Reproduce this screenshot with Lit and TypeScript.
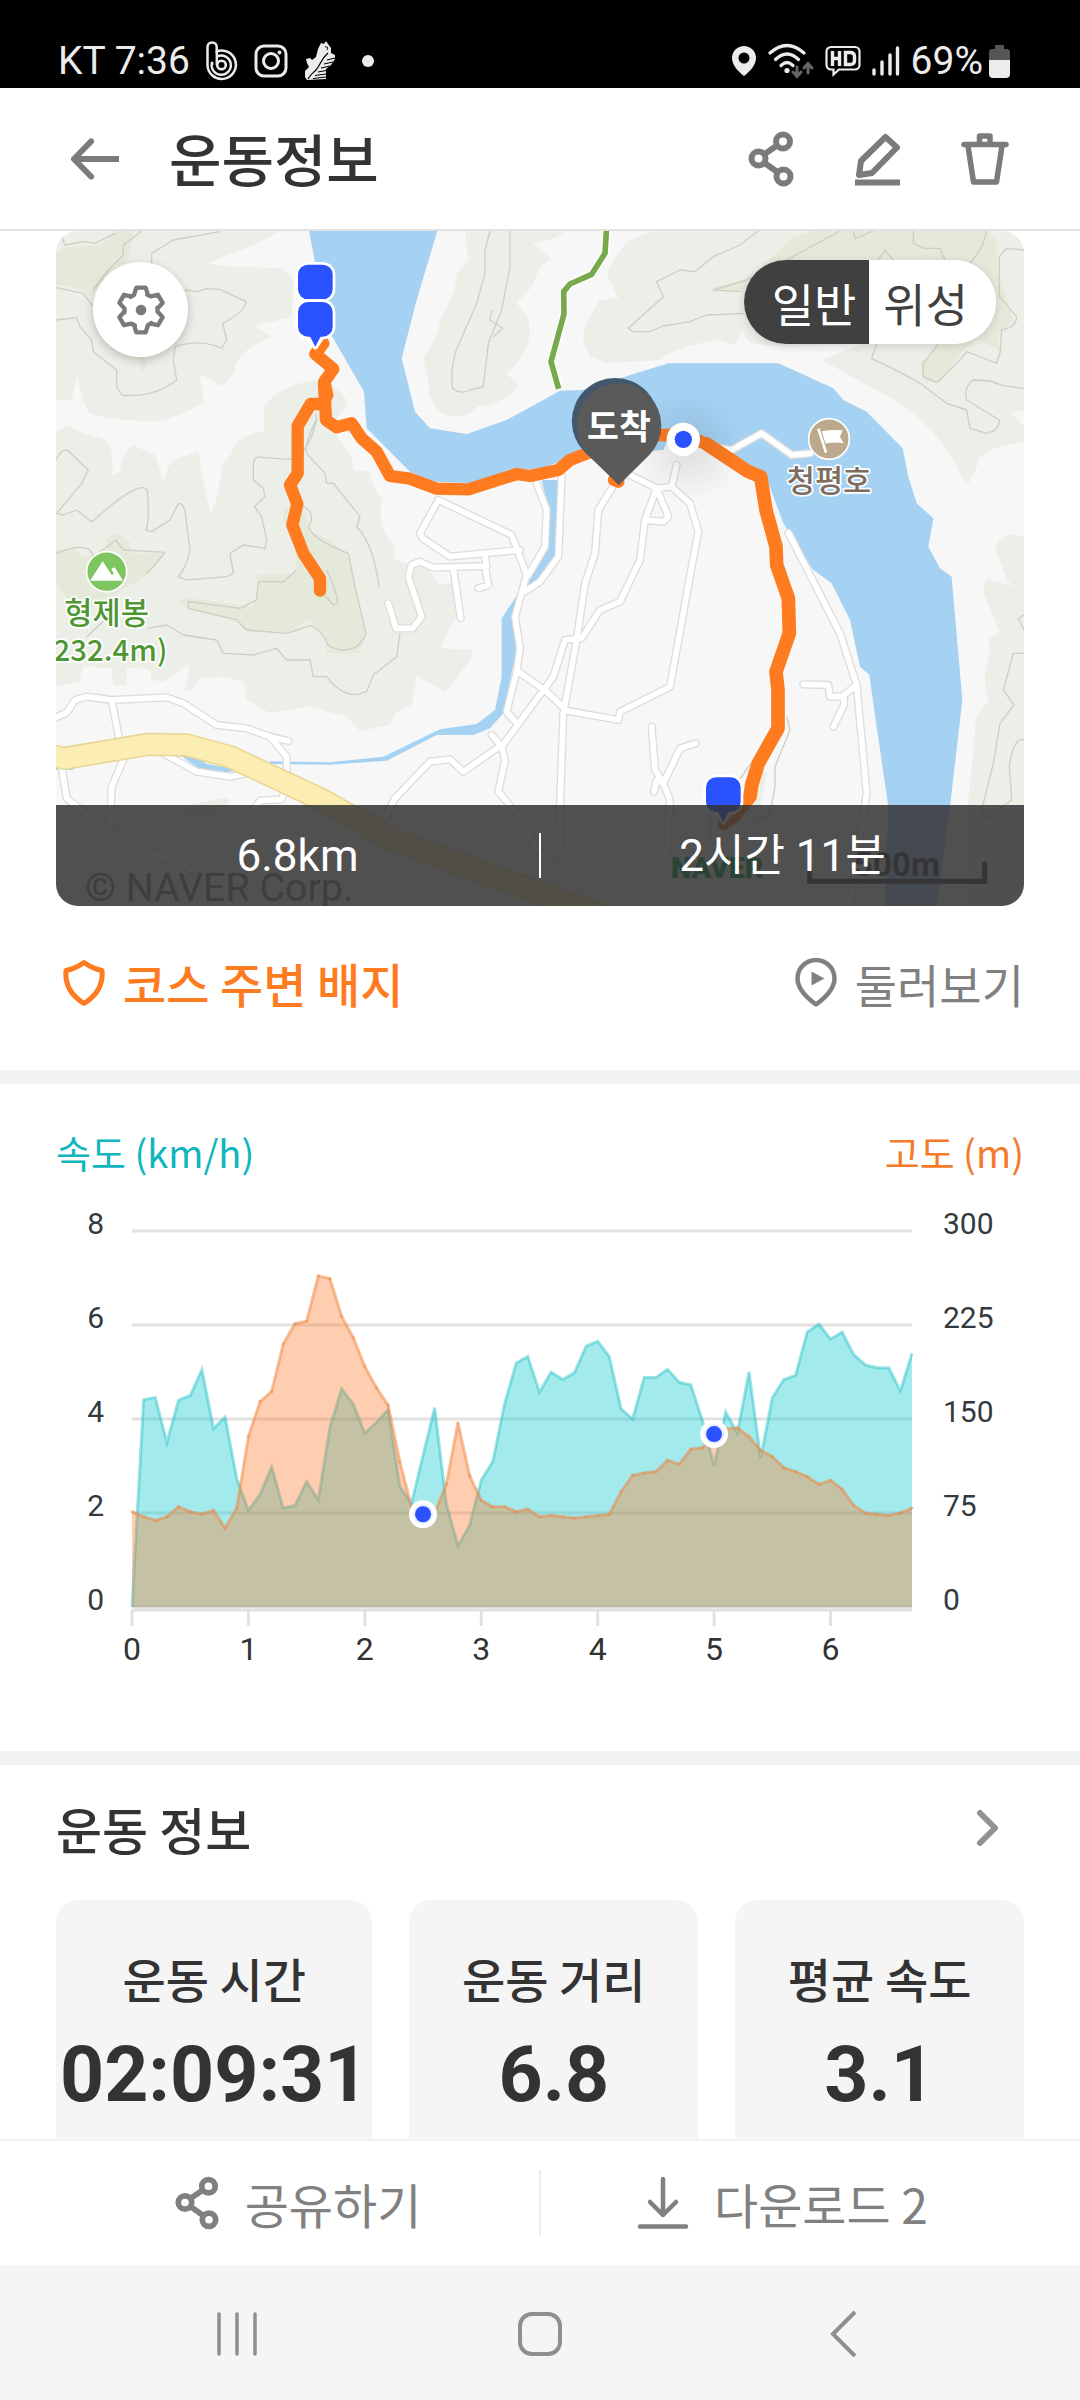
import { LitElement, html, svg, css } from "lit";
import { customElement, state } from "lit/decorators.js";

/** Speed in km/h and altitude in metres, one sample for every 100 m. */
const SPEED = [
  0, 4.41, 4.46, 3.5, 4.4, 4.5, 5.05, 3.8, 4.04, 2.73, 2.05, 2.4, 2.98, 2.1, 2.16, 2.67, 2.28, 3.83, 4.64, 4.32,
  3.7, 3.93, 4.2, 2.57, 2.2, 3.22, 4.24, 2.2, 1.3, 1.74, 2.7, 3.1, 4.32, 5.19, 5.33, 4.57, 5, 4.84, 4.98, 5.55,
  5.65, 5.33, 4.22, 4, 4.88, 4.88, 5.06, 4.78, 4.73, 3.97, 3, 4.15, 3.7, 5, 3.17, 4.45, 4.84, 4.93, 5.85, 6.02,
  5.7, 5.85, 5.37, 5.15, 5.09, 5.09, 4.6, 5.4,
];
const ALTITUDE = [
  76, 72, 69, 72, 80, 76, 74, 77, 63, 79, 136, 164, 172, 210, 226, 228, 264, 262, 232, 215, 192, 175, 161, 116, 80,
  74, 75, 98, 147, 105, 85, 80, 80, 76, 78, 72, 73, 72, 71, 72, 73, 74, 92, 105, 107, 108, 117, 114, 126, 127, 138,
  142, 143, 136, 125, 120, 111, 108, 104, 98, 101, 94, 81, 75, 74, 73, 75, 79,
];

const shareIcon = (w: number) => html`
  <svg width=${w} height=${w + 8} viewBox="0 0 48 56" fill="none" stroke="currentColor" stroke-width="6" aria-hidden="true">
    <circle cx="11.5" cy="27.5" r="7"></circle>
    <circle cx="36" cy="10.5" r="7"></circle>
    <circle cx="36.5" cy="45.5" r="7"></circle>
    <path d="M17 23.500L30 14.500M17 31.500L31 41.500"></path>
  </svg>`;

@customElement("status-bar")
class StatusBar extends LitElement {
  static styles = css`
    :host {
      display: flex;
      justify-content: space-between;
      align-items: flex-end;
      height: 88px;
      padding: 0 70px 1px 58px;
      box-sizing: border-box;
      background: #000;
      color: #ececec;
      font: 400 39px/52px Roboto, "Noto Sans CJK KR", sans-serif;
    }
    .side {
      display: flex;
      align-items: center;
      height: 52px;
    }
    .left {
      gap: 16px;
    }
    .right {
      gap: 11px;
    }
    svg {
      display: block;
    }
    .charge {
      display: flex;
      align-items: center;
      gap: 6px;
    }
  `;
  render() {
    return html`
      <div class="side left">
        <span>KT 7:36</span>
        <svg width="32" height="40" viewBox="0 0 32 40" fill="none" stroke="#ececec" aria-hidden="true">
          <path d="M1.500 24V6a4.600 4.600 0 0 1 9.200 0v4.500a14.200 14.200 0 1 1-9.200 13.500" stroke-width="2.500"></path>
          <path d="M6.200 24V21a9.600 9.600 0 1 0 5-5.500" stroke-width="2.400"></path>
          <path d="M10.800 10v14" stroke-width="2.400"></path>
          <circle cx="15.500" cy="24" r="4.300" stroke-width="2.600"></circle>
        </svg>
        <svg width="34" height="34" viewBox="0 0 34 34" fill="none" stroke="#ececec" stroke-width="3" aria-hidden="true">
          <rect x="2" y="2" width="30" height="30" rx="8"></rect>
          <circle cx="17" cy="17" r="7.500"></circle>
          <circle cx="25.500" cy="8.500" r="2" fill="#ececec" stroke="none"></circle>
        </svg>
        <svg width="32" height="40" viewBox="0 0 32 40" aria-hidden="true">
          <path
            d="M1 30L5 26 3 22 2 18 6 17 8 19 12 16 14 8 17 2 20 3 22 0 24 3 27 7 27 12 31 14 31 18 27 24 22 28 22 38 3 39 1 36z"
            fill="#ececec"
          ></path>
          <path
            d="M24 12C17 18 17 23 12 29C9 32 6 34 4 38M31 17L23 19M29 21L20 23M26 25L17 27M22 29.500L14 31M22 33L11 34.500M22 36L9 37.500"
            stroke="#000"
            stroke-width="1.200"
            fill="none"
          ></path>
          <path d="M21 6q4-1 2 3" stroke="#000" stroke-width="1" fill="none"></path>
        </svg>
        <svg width="40" height="12" viewBox="0 0 40 12" aria-hidden="true">
          <circle cx="16" cy="6" r="6" fill="#ececec"></circle>
        </svg>
      </div>
      <div class="side right">
        <svg width="26" height="32" viewBox="0 0 26 32" aria-hidden="true">
          <path
            fill="#ececec"
            fill-rule="evenodd"
            d="M13 1A12 12 0 0 1 25 13C25 21 17 28 13 31C9 28 1 21 1 13A12 12 0 0 1 13 1zM13 7.500a5.500 5.500 0 1 0 0 11a5.500 5.500 0 0 0 0-11z"
          ></path>
        </svg>
        <svg width="46" height="36" viewBox="0 0 46 36" fill="none" stroke-linecap="round" aria-hidden="true">
          <g stroke="#ececec" stroke-width="3.200">
            <path d="M2 10Q19-5 36 10"></path>
            <path d="M7.500 16.500Q19 5.500 30.500 16.500"></path>
            <path d="M13 22.500Q19 16.500 25 22.500"></path>
          </g>
          <circle cx="19" cy="27.500" r="2.600" fill="#ececec"></circle>
          <path d="M29 24v9m-4-4l4 4.500 4-4.500M40 30v-9m-4 4l4-4.500 4 4.500" stroke="#666" stroke-width="3"></path>
        </svg>
        <svg width="36" height="32" viewBox="0 0 36 32" fill="none" stroke="#ececec" aria-hidden="true">
          <path
            d="M6 2H30a4.500 4.500 0 0 1 4.500 4.500V20a4.500 4.500 0 0 1-4.500 4.500H14L8.500 29.500V24.500H6A4.500 4.500 0 0 1 1.500 20V6.500A4.500 4.500 0 0 1 6 2z"
            stroke-width="2.200"
          ></path>
          <path d="M7.500 6v15M14.500 6v15M7.500 13.500h7M20.500 7.500v12h4.500q4.500 0 4.500-4v-4q0-4-4.500-4z" stroke-width="3.400"></path>
        </svg>
        <svg width="28" height="32" viewBox="0 0 28 32" stroke="#ececec" stroke-width="3.400" stroke-linecap="round" aria-hidden="true">
          <path d="M2 25v4M10 17v12M18 10v19M25.500 3v26"></path>
        </svg>
        <span class="charge">
          <span>69%</span>
          <svg width="21" height="33" viewBox="0 0 21 33" aria-hidden="true">
            <path d="M6 0h9v4h3q3 0 3 4v8H0V8q0-4 3-4h3z" fill="#555"></path>
            <path d="M0 15h21v14q0 4-4 4H4q-4 0-4-4z" fill="#ececec"></path>
          </svg>
        </span>
      </div>
    `;
  }
}

const pin = (x: number, y: number, tail: boolean) => svg`
  ${tail ? svg`<path d="M${x - 24} ${y + 46}L${x} ${y + 82}L${x + 24} ${y + 46}z" fill="#2a52ff" stroke="#fff" stroke-width="16" stroke-linejoin="round"></path>` : null}
  <rect x=${x - 52} y=${y - 52} width="104" height="104" rx="30" fill="#2a52ff" stroke="#fff" stroke-width="16" paint-order="stroke"></rect>
  ${tail ? svg`<path d="M${x - 18} ${y + 48}L${x} ${y + 82}L${x + 18} ${y + 48}z" fill="#2a52ff"></path>` : null}`;

const ROADS = [
  "M1195 840L1140 940 1148 955 1230 1010 1440 990",
  "M1195 840L1415 945 1460 1065 1425 1190 1440 1285 1430 1355 1400 1475 1430 1510",
  "M1045 1150L1068 1225 1118 1225 1145 1190 1105 1070 1115 1035 1138 1025 1180 1043 1335 1038 1345 1095 1315 1105",
  "M1240 1045L1262 1195M1335 1005L1340 1040",
  "M1455 1115L1500 1085 1555 1010 1565 765",
  "M1490 790L1520 870 1515 980 1465 1065",
  "M1740 765L1675 870 1665 1000 1635 1090 1610 1260 1570 1480 1560 1760 1565 1950",
  "M1740 765L1770 765 1850 805 1815 900 1800 1020 1740 1145 1680 1170 1625 1255 1575 1260 1540 1370 1385 1580",
  "M1850 805L1885 890 1870 905 1815 900",
  "M1910 735L1895 800 1850 805M1895 800L1950 850 1975 935 1955 1040 1890 1400 1740 1475 1735 1500 1580 1472 1520 1415 1435 1355",
  "M1355 1545L1385 1580 1395 1620 1375 1715 1430 1780 1500 1900 1600 2020",
  "M1385 1575L1270 1655 1230 1618 1170 1625 1065 1735 1030 1800",
  "M30 1500L80 1478 105 1440 140 1430 215 1440 380 1432 430 1450 530 1515 620 1525 690 1550 745 1563",
  "M215 1440L240 1570M250 1620L215 1700 210 1820",
  "M690 1550L740 1610 740 1700 725 1738 660 1742 640 1770",
  "M65 1640L80 1735 200 1830 340 1900 480 1960",
  "M370 1600L470 1655 570 1670 650 1655",
  "M2245 938L2400 1240 2450 1395 2480 1720 2430 2058",
  "M2290 1393L2365 1395 2370 1430 2412 1430 2412 1455 2380 1520M2412 1425L2450 1395",
  "M1835 1520L1845 1650 1870 1690 1890 1740 1880 1900M1967 1570L1920 1585 1870 1690 1850 1680 1842 1715",
  "M2020 680L2075 690 2165 640 2255 705 2310 700",
];

@customElement("course-map")
class CourseMap extends LitElement {
  @state() private view = "일반";

  static styles = css`
    :host {
      display: block;
      position: relative;
      aspect-ratio: 968 / 675;
      border-radius: 22px;
      overflow: hidden;
      background: #f7f7f7;
      font-family: "Noto Sans CJK KR", sans-serif;
    }
    .canvas {
      display: block;
      width: 100%;
      height: 100%;
    }
    .settings {
      position: absolute;
      left: 37px;
      top: 31px;
      width: 95px;
      height: 95px;
      border: 0;
      border-radius: 50%;
      padding: 0;
      display: grid;
      place-items: center;
      background: #fff;
      color: #7a7a7a;
      box-shadow: 0 3px 10px rgba(0, 0, 0, 0.22);
    }
    .toggle {
      position: absolute;
      right: 28px;
      top: 29px;
      display: flex;
      height: 84px;
      border-radius: 42px;
      overflow: hidden;
      background: #fff;
      box-shadow: 0 2px 10px rgba(0, 0, 0, 0.14);
    }
    .mode {
      border: 0;
      background: #fff;
      color: #404040;
      font: 400 46px/84px "Noto Sans CJK KR", sans-serif;
      padding: 0 28px 0 14px;
    }
    .mode:first-child {
      padding: 0 13px 0 28px;
    }
    .mode.on {
      background: #404040;
      color: #fff;
    }
    .summary {
      position: absolute;
      left: 0;
      right: 0;
      bottom: 0;
      height: 101px;
      display: flex;
      align-items: center;
      background: rgba(51, 51, 51, 0.85);
      color: #fff;
      font: 400 44px/60px Roboto, "Noto Sans CJK KR", sans-serif;
    }
    .summary span {
      flex: 1;
      text-align: center;
    }
    .summary i {
      width: 2px;
      height: 45px;
      background: #fff;
    }
    .place {
      font-weight: 500;
      font-size: 92px;
      paint-order: stroke;
      stroke: #fff;
      stroke-width: 10px;
      stroke-linejoin: round;
    }
    .height {
      font-size: 88px;
    }
    .arrive {
      font-size: 104px;
      font-weight: 700;
    }
    .copyright {
      font: 400 118px Roboto, sans-serif;
    }
    .logo {
      font: 900 86px Roboto, sans-serif;
    }
    .scale {
      font: 700 100px Roboto, sans-serif;
    }
  `;

  private gear() {
    const pts: string[] = [];
    for (let k = 0; k < 6; k++) {
      const a = (k * Math.PI) / 3;
      for (const [x, y] of [[-31, -39], [-21, -45], [-14, -67], [14, -67], [21, -45]]) {
        pts.push(`${(x * Math.cos(a) - y * Math.sin(a)).toFixed(1)},${(x * Math.sin(a) + y * Math.cos(a)).toFixed(1)}`);
      }
    }
    return html`<svg width="54" height="54" viewBox="-81 -81 162 162" aria-hidden="true">
      <polygon points=${pts.join(" ")} fill="none" stroke="currentColor" stroke-width="13" stroke-linejoin="round"></polygon>
      <circle r="16" fill="currentColor"></circle>
    </svg>`;
  }

  private terrain() {
    return svg`
      <g fill="#ecefe8">
        <path d="M48 33H720L640 75 500 130 560 140 720 143Q750 155 760 190L755 290 645 318 695 350Q600 390 590 430Q580 480 545 498L478 462 493 548Q400 600 340 603Q200 603 150 580 130 560 112 470L95 540H48z"></path>
        <path d="M48 635L85 617 130 640 190 657Q220 665 218 765L240 755Q250 690 280 676L345 705 372 787Q380 730 410 715L475 695Q490 800 512 882Q530 850 548 735L575 700Q590 645 672 633V560Q720 490 830 483Q920 500 920 560L885 600 890 650Q940 700 942 750L990 755Q1000 820 1027 830Q1010 930 1060 970L1065 1020 1165 1045 1200 1095 1235 1085 1250 1190 1225 1230 1205 1285 1298 1290 1290 1320 1215 1418 1130 1365 1115 1455 1070 1475 1050 1515 960 1533 920 1490 810 1460 690 1480 620 1440 612 1385 550 1370 480 1375 455 1410 435 1410 450 1330 370 1385 335 1380 330 1350 260 1340V1395H220L215 1345 130 1340 120 1385 48 1400z"></path>
        <path d="M1275 33H1575L1545 55 1478 70 1535 115 1500 140 1475 200 1430 250 1460 285Q1495 370 1400 460L1430 490Q1430 540 1310 560 1290 590 1230 590 1165 570 1165 480L1150 410Q1190 370 1200 300 1250 220 1250 160L1285 120z"></path>
        <path d="M1840 33L1760 65Q1710 130 1700 160L1735 235 1680 240Q1620 330 1632 370L1650 410 1700 430 1860 420Q1900 380 2040 360L2085 375 2105 335 2130 370 2240 380 2470 370 2345 420 2580 550Q2680 620 2740 720 2770 790 2785 790 2810 750 2820 710 2870 670 2952 668V620L2915 577 2952 572V33z"></path>
        <path d="M2952 950L2915 942Q2880 950 2865 980L2900 1080 2920 1098 2840 1078Q2820 1110 2840 1140L2880 1235 2845 1260 2850 1300Q2820 1370 2848 1440L2808 1490 2795 1650 2783 1760V2058H2952z"></path>
        <path d="M2170 1650L2180 1660 2160 1760 2110 1800z"></path>
        <path d="M450 1755L560 1732 570 1745 520 1790H430z"></path>
      </g>
      <g fill="#e5e9da">
        <path d="M48 100L80 80 180 75 230 33H280L270 100Q255 145 200 165L150 230Q120 200 48 195z"></path>
        <path d="M296 400L320 425 308 460z"></path>
        <path d="M48 990L100 985 130 1015 200 990 200 960 225 938 270 965 270 1000 375 1000 330 1060 230 1120 150 1170 90 1150 48 1090z"></path>
        <path d="M735 860L790 860 805 930Q900 970 930 1020L970 1200 975 1240 960 1300 860 1300 855 1250 810 1198 740 1240 620 1235 590 1200 440 1165 410 1140 450 1135 640 1160 655 1085 640 1065 765 1060 775 960 730 900z"></path>
        <path d="M2010 205L2110 180 2200 110 2250 55 2320 33H2840L2870 60 2870 150 2920 300 2870 345 2880 390 2810 360 2760 400 2700 490 2650 480 2640 430 2700 372 2100 215z"></path>
      </g>
      <g fill="none" stroke="#cbcfc5" stroke-width="4" stroke-linejoin="round">
        <path d="M65 50L75 75 130 65 165 70 225 40M305 33L250 75V105L205 150 160 210M160 260L130 220 48 203M48 300L110 293 120 320 155 360 160 395 230 450V500L245 525Q340 535 410 480L400 420 405 380Q480 355 545 385L560 360 548 310Q620 270 618 245L540 208 500 206 470 215 435 210M540 35L400 60 335 100V150"></path>
        <path d="M48 720Q70 680 85 693L145 750 125 790 50 880 70 885 110 870 155 905 185 880Q300 780 322 810 330 900 318 930L335 935 390 900 415 850Q435 850 437 890L450 990Q440 1040 415 1070L440 1080 560 1070 580 1060 570 1000 610 975 675 985 680 960 665 890 643 860 675 830 670 805 640 780V730Q645 705 670 712L740 718Q800 720 830 600L828 580M828 600Q790 680 800 700L855 760 860 790 880 790 960 890 950 920Q1000 970 1017 1100M48 1000Q150 960 160 1010L228 960 250 990 375 997Q350 1030 320 1060M790 860Q830 880 805 920 820 960 925 1000L945 1100 978 1240Q960 1290 910 1290 860 1285 858 1260 820 1205 800 1220L740 1240 620 1230 590 1200 445 1165 445 1145 600 1165 650 1140 655 1085 730 1085 770 1050M860 1050Q890 1110 893 1150L880 1155 840 1110M140 1250L210 1185M320 1225L380 1215 430 1245 530 1260 550 1300 640 1305 710 1285 740 1320 810 1320 820 1370 860 1370Q900 1425 950 1424L980 1415 1000 1365 1070 1310 1080 1240"></path>
        <path d="M1350 33L1335 90V160L1310 250 1245 400Q1230 470 1238 505 1260 525 1290 510L1330 500 1345 370 1385 270 1410 140V33M1355 270L1350 300 1388 325 1360 350"></path>
        <path d="M2155 33L2100 75 2020 110 1965 155 1920 150 1850 185 1870 230 1765 325 1780 335 1830 335 1870 318 1950 305 2000 285 2110 280M2400 33L2240 120 2120 180 2020 210 2100 215M2440 33L2445 55 2500 33M2620 33V70L2650 85 2700 85 2715 120M2840 33Q2830 90 2780 140M2515 120L2535 90 2560 120M2952 90L2900 85 2878 110V230L2930 290Q2930 320 2885 330L2880 400 2870 430 2780 395 2760 420 2690 488 2650 470V430L2695 372M2510 372L2495 415Q2600 465 2640 490L2720 550 2780 570 2790 625 2840 640Q2880 630 2878 600L2780 540Q2770 500 2800 480L2850 483 2890 497 2952 505M2952 1300H2920L2890 1410 2922 1455 2880 1510 2860 1630 2825 1770 2840 1795 2915 1740 2908 1640Q2920 1550 2952 1560M2952 1185L2935 1195 2952 1230"></path>
        <path d="M2240 1490L2250 1530 2205 1640V1700L2190 1780 2140 1810M2140 1620L2090 1690 2010 1790V1860"></path>
      </g>`;
  }

  private water() {
    return svg`
      <g fill="#a5d1f3">
        <path d="M807 33L822 110 860 330 878 352 972 515 980 625 1110 755 1180 785 1300 790 1420 745 1500 750 1590 710 1870 690 1880 665 2000 680 2100 740 2180 775 2230 910 2300 1020 2320 1050 2375 1090 2430 1200 2460 1340 2488 1365 2510 1520 2545 1760 2535 2058H2690L2730 1760 2767 1440 2735 1070 2700 1045 2665 980 2680 895 2630 850 2605 770 2588 685 2480 575 2410 540 2380 505 2215 430H1885L1740 475 1630 510 1560 512 1500 545 1400 600 1280 642 1170 625 1125 575 1085 415 1130 240 1192 33z"></path>
        <path d="M1505 780H1560L1545 1010 1480 1095 1460 1100 1515 980 1525 870z"></path>
        <path d="M1435 1120L1385 1195V1370L1365 1470 1310 1512 1200 1528 1030 1610 870 1627 690 1624V1632L870 1634 1040 1622 1190 1545H1300L1350 1525 1390 1480 1430 1285 1420 1195z"></path>
        <path d="M420 1605L470 1610 500 1632 600 1650 540 1660 480 1648z"></path>
        <path d="M48 1640L150 1620 95 1650H48z"></path>
      </g>`;
  }

  private route() {
    return svg`
      <g fill="none" stroke="#ff7b20" stroke-width="37" stroke-linejoin="round" stroke-linecap="round">
        <path d="M850 370L826 402 880 447 853 485 862 525 848 552 812 552 773 618V760L750 795 772 852 757 915 790 1000 840 1075V1112"></path>
        <path d="M852 490L858 600 890 622 935 610 965 655 1010 695 1050 768 1110 776 1190 806 1285 808 1430 762 1470 768 1555 750 1590 720 1680 685 1780 645 1930 645 2000 672"></path>
        <path d="M1722 780L1735 785"></path>
        <path d="M2000 672L2120 752 2162 770 2178 870 2208 980 2210 1035 2245 1135 2248 1240 2208 1355 2214 1410V1525L2155 1630 2135 1695 2130 1730 2080 1790" stroke-width="41"></path>
        <path d="M2080 1790L2050 1812"></path>
      </g>`;
  }

  private markers() {
    return svg`
      <circle cx="200" cy="1055" r="60" fill="#7dc55e" stroke="#fff" stroke-width="5"></circle>
      <path d="M150 1082L188 1024 215 1064 222 1062 214 1046 224 1042 249 1082z" fill="#fff"></path>
      <text class="place" x="200" y="1212" text-anchor="middle" fill="#4f9635">형제봉</text>
      <text class="place height" x="382" y="1323" text-anchor="end" fill="#4f9635">(232.4m)</text>
      <circle cx="2367" cy="657" r="61" fill="#bca88c" stroke="#fff" stroke-width="5"></circle>
      <path d="M2335 626L2358 698" stroke="#fff" stroke-width="8"></path>
      <path d="M2345 634Q2372 628 2408 631L2400 650 2411 670Q2380 664 2357 671z" fill="#fff"></path>
      <text class="place" x="2367" y="815" text-anchor="middle" fill="#7d6d60">청평호</text>
      ${pin(826, 186, false)} ${pin(826, 298, true)} ${pin(2050, 1724, true)}
      <circle cx="1945" cy="680" r="170" fill="url(#halo)"></circle>
      <path d="M1737 795L1634 696A130 130 0 1 1 1817 696z" fill="#43586c"></path>
      <path d="M1737 795L1647 706A127 127 0 1 1 1827 706z" fill="#5a5a5a"></path>
      <text class="arrive" x="1737" y="658" text-anchor="middle" fill="#fff">도착</text>
      <circle cx="1930" cy="658" r="50" fill="#fff"></circle>
      <circle cx="1930" cy="658" r="26" fill="#2a52ff"></circle>
      <text class="copyright" x="135" y="2042" fill="#808080">© NAVER Corp.</text>
      <rect x="1845" y="1880" width="380" height="130" rx="65" fill="none" stroke="#fff" stroke-width="5"></rect>
      <text class="logo" x="2032" y="1975" text-anchor="middle" fill="#03a040">NAVER</text>
      <text class="scale" x="2570" y="1968" text-anchor="middle" fill="#444">500m</text>
      <path d="M2309 1925V1984H2834V1925" fill="none" stroke="#444" stroke-width="15"></path>`;
  }

  render() {
    return html`
      <svg class="canvas" viewBox="48 33 2904 2025" preserveAspectRatio="xMidYMid slice" role="img" aria-label="코스 지도">
        <defs>
          <radialGradient id="halo">
            <stop offset="0.2" stop-color="#000" stop-opacity="0.08"></stop>
            <stop offset="1" stop-color="#000" stop-opacity="0"></stop>
          </radialGradient>
        </defs>
        ${this.terrain()} ${this.water()}
        <g fill="none" stroke-linejoin="round" stroke-linecap="round">
          <path d=${ROADS.join("")} stroke="#dddddd" stroke-width="25"></path>
          <path d=${ROADS.join("")} stroke="#fff" stroke-width="17"></path>
          <path d="M1700 20L1695 100 1655 163 1590 192 1571 215 1572 282 1533 425 1553 490" stroke="#fff" stroke-width="25"></path>
          <path d="M1700 20L1695 100 1655 163 1590 192 1571 215 1572 282 1533 425 1556 506" stroke="#78aa4d" stroke-width="17" stroke-linecap="butt"></path>
          <path d="M20 1604L75 1615 325 1573 440 1575 570 1610 850 1741 1060 1860 1500 2020 1700 2090" stroke="#ead797" stroke-width="70"></path>
          <path d="M20 1604L75 1615 325 1573 440 1575 570 1610 850 1741 1060 1860 1500 2020 1700 2090" stroke="#fceeb3" stroke-width="60"></path>
        </g>
        ${this.route()} ${this.markers()}
      </svg>
      <button class="settings" aria-label="설정">${this.gear()}</button>
      <div class="toggle" role="group" aria-label="지도 종류">
        ${["일반", "위성"].map(
          (m) => html`<button
            class="mode ${this.view === m ? "on" : ""}"
            aria-pressed=${this.view === m}
            @click=${() => (this.view = m)}
          >${m}</button>`,
        )}
      </div>
      <div class="summary"><span>6.8km</span><i></i><span>2시간 11분</span></div>
    `;
  }
}

@customElement("pace-chart")
class PaceChart extends LitElement {
  static styles = css`
    :host {
      display: block;
    }
    svg {
      display: block;
      width: 100%;
    }
    .axis {
      font: 400 30px Roboto, sans-serif;
      fill: #333a3f;
    }
    .km {
      font: 400 32px Roboto, sans-serif;
      fill: #333;
    }
  `;
  render() {
    const left = 76;
    const base = 417;
    const step = 780 / 67;
    const x = (i: number) => left + i * step;
    const line = (data: number[], max: number) =>
      data.map((v, i) => `${x(i).toFixed(1)},${(base - (v / max) * 376).toFixed(1)}`).join(" ");
    const speed = line(SPEED, 8);
    const altitude = line(ALTITUDE, 300);
    const close = `${x(67)},${base} ${left},${base}`;
    return html`
      <svg viewBox="0 0 968 480" role="img" aria-label="속도와 고도">
        ${[0, 1, 2, 3, 4].map((k) => {
          const y = base - k * 94;
          return svg`
            <path d="M${left} ${y}H${left + 780}" stroke="#e1e1e1" stroke-width="3"></path>
            <text class="axis" x="48" y=${y + 3} text-anchor="end">${k * 2}</text>
            <text class="axis" x="887" y=${y + 3}>${k * 75}</text>`;
        })}
        <polygon points="${speed} ${close}" fill="#19cacf" fill-opacity="0.4"></polygon>
        <polyline points=${speed} fill="none" stroke="#19bcc3" stroke-opacity="0.42" stroke-width="3"></polyline>
        <polygon points="${altitude} ${close}" fill="#ff7b29" fill-opacity="0.37"></polygon>
        <polyline points=${altitude} fill="none" stroke="#f0843c" stroke-opacity="0.5" stroke-width="3"></polyline>
        ${ALTITUDE.map((v, i) => svg`<circle cx=${x(i)} cy=${base - (v / 300) * 376} r="1.6" fill="#ee8a48" fill-opacity="0.5"></circle>`)}
        <path d="M${left} 420H${left + 780}" stroke="#e1e1e1" stroke-width="3"></path>
        ${[0, 1, 2, 3, 4, 5, 6].map(
          (k) => svg`
            <path d="M${x(k * 10)} 420V436" stroke="#e1e1e1" stroke-width="3"></path>
            <text class="km" x=${x(k * 10)} y="470" text-anchor="middle">${k}</text>`,
        )}
        ${[25, 50].map(
          (i) => svg`
            <circle cx=${x(i)} cy=${base - (ALTITUDE[i] / 300) * 376} r="14" fill="#fff"></circle>
            <circle cx=${x(i)} cy=${base - (ALTITUDE[i] / 300) * 376} r="10" fill="#e8ecff"></circle>
            <circle cx=${x(i)} cy=${base - (ALTITUDE[i] / 300) * 376} r="8" fill="#2a52ff"></circle>`,
        )}
      </svg>
    `;
  }
}

@customElement("app-root")
class AppRoot extends LitElement {
  static styles = css`
    :host {
      display: flex;
      flex-direction: column;
      height: 100vh;
      background: #fff;
      color: #333;
      font-family: "Noto Sans CJK KR", sans-serif;
    }
    button {
      border: 0;
      padding: 0;
      background: none;
      color: inherit;
      font: inherit;
    }
    svg {
      display: block;
    }
    h1,
    h2,
    h3,
    p {
      margin: 0;
      font-weight: 500;
    }
    .header {
      display: flex;
      align-items: center;
      height: 141px;
      padding: 0 51px;
      border-bottom: 2px solid #e2e2e2;
    }
    .header h1 {
      flex: 1;
      padding: 0 0 4px 30px;
      font-size: 57px;
      line-height: 80px;
    }
    .tool {
      width: 88px;
      height: 88px;
      display: grid;
      place-items: center;
      color: #7b7b7b;
    }
    .tools {
      display: flex;
      gap: 19px;
    }
    .content {
      flex: 1;
      min-height: 0;
      overflow: hidden;
    }
    .section {
      padding: 0 56px;
    }
    .gap {
      height: 14px;
      background: #f1f2f4;
    }
    .course {
      display: flex;
      justify-content: space-between;
      padding: 44px 0 54px;
      font-size: 46px;
      line-height: 66px;
    }
    .link {
      display: flex;
      align-items: center;
      gap: 17px;
      color: #808080;
      text-decoration: none;
    }
    .badge {
      padding-left: 6px;
      color: #ff7b20;
      font-size: 47px;
      font-weight: 500;
    }
    .legend {
      display: flex;
      justify-content: space-between;
      padding: 40px 0 10px;
      font-size: 38px;
      line-height: 56px;
    }
    .speed {
      color: #10b5bd;
    }
    .altitude {
      color: #f47b2a;
    }
    .chart {
      padding-bottom: 81px;
    }
    .info {
      display: flex;
      justify-content: space-between;
      align-items: center;
      padding: 27px 0 36px;
      font-size: 50px;
      line-height: 72px;
    }
    .info h2 {
      font-size: inherit;
    }
    .more {
      padding: 0 25px;
      color: #929292;
    }
    .cards {
      display: flex;
      gap: 37px;
    }
    .card {
      flex: 1;
      min-width: max-content;
      padding: 48px 4px 60px;
      box-sizing: border-box;
      border-radius: 22px;
      background: #f5f5f5;
      text-align: center;
    }
    .card h3 {
      font-size: 47px;
      line-height: 60px;
    }
    .card p {
      margin-top: 22px;
      font: 700 77px/90px Roboto, sans-serif;
    }
    .actions {
      display: flex;
      align-items: center;
      height: 124px;
      padding: 0 56px;
      border-top: 2px solid #f2f2f2;
      color: #808080;
      font-size: 48px;
      line-height: 70px;
    }
    .action {
      flex: 1;
      display: flex;
      justify-content: center;
      align-items: center;
      gap: 25px;
    }
    .rule {
      width: 2px;
      height: 66px;
      background: #ececec;
    }
    .nav {
      display: flex;
      justify-content: space-around;
      align-items: center;
      height: 135px;
      padding: 3px 86px 0;
      box-sizing: border-box;
      background: #f5f5f5;
      color: #8f8f8f;
    }
    .nav button {
      flex: 1;
      display: grid;
      place-items: center;
    }
  `;

  private stats = [
    ["운동 시간", "02:09:31"],
    ["운동 거리", "6.8"],
    ["평균 속도", "3.1"],
  ];

  render() {
    return html`
      <status-bar></status-bar>
      <header class="header">
        <button class="tool" aria-label="뒤로">
          <svg width="52" height="44" viewBox="0 0 52 44" fill="none" stroke="currentColor" stroke-width="6" aria-hidden="true">
            <path d="M50 22H5"></path>
            <path d="M22 4.500L5 22 22 39.500" stroke-linecap="round" stroke-linejoin="round"></path>
          </svg>
        </button>
        <h1>운동정보</h1>
        <div class="tools">
          <button class="tool" aria-label="공유">${shareIcon(48)}</button>
          <button class="tool" aria-label="편집">
            <svg width="50" height="56" viewBox="0 0 50 56" fill="none" stroke="currentColor" stroke-width="6" stroke-linejoin="round" aria-hidden="true">
              <path d="M32.500 6L44 16.500 19 42 6 44 8 30z"></path>
              <path d="M2 51.500H47"></path>
            </svg>
          </button>
          <button class="tool" aria-label="삭제">
            <svg width="50" height="56" viewBox="0 0 50 56" fill="none" stroke="currentColor" stroke-width="5.500" stroke-linejoin="round" aria-hidden="true">
              <path d="M4 13.500H46" stroke-linecap="round"></path>
              <path d="M19.500 13V5H30V13"></path>
              <path d="M8 15L13.500 51H36.500L42 15"></path>
            </svg>
          </button>
        </div>
      </header>
      <main class="content">
        <section class="section">
          <course-map></course-map>
          <div class="course">
            <a class="link badge" href="#badges">
              <svg width="44" height="50" viewBox="0 0 44 50" fill="none" stroke="currentColor" stroke-width="5" stroke-linejoin="round" aria-hidden="true">
                <path d="M22 4.500Q30 10.500 40 12.500Q42 33 22 45.500Q2 33 4 12.500Q14 10.500 22 4.500z"></path>
              </svg>
              코스 주변 배지
            </a>
            <a class="link" href="#tour">
              <svg width="44" height="52" viewBox="0 0 44 52" fill="none" stroke="currentColor" stroke-width="4.500" stroke-linejoin="round" aria-hidden="true">
                <path d="M22 47.500Q3.500 34 3.500 21.500A18.500 18.500 0 0 1 40.500 21.500Q40.500 34 22 47.500z"></path>
                <path d="M17.500 14.500V28.500L30.500 21.500z" fill="currentColor" stroke="none"></path>
              </svg>
              둘러보기
            </a>
          </div>
        </section>
        <div class="gap"></div>
        <section class="section chart">
          <div class="legend"><span class="speed">속도 (km/h)</span><span class="altitude">고도 (m)</span></div>
          <pace-chart></pace-chart>
        </section>
        <div class="gap"></div>
        <section class="section">
          <div class="info">
            <h2>운동 정보</h2>
            <button class="more" aria-label="더보기">
              <svg width="24" height="40" viewBox="0 0 24 40" fill="none" stroke="currentColor" stroke-width="6" stroke-linecap="round" stroke-linejoin="round" aria-hidden="true">
                <path d="M5 5L20 20 5 35"></path>
              </svg>
            </button>
          </div>
          <div class="cards">
            ${this.stats.map(([name, value]) => html`<article class="card"><h3>${name}</h3><p>${value}</p></article>`)}
          </div>
        </section>
      </main>
      <div class="actions">
        <button class="action">${shareIcon(46)}<span>공유하기</span></button>
        <span class="rule"></span>
        <button class="action">
          <svg width="52" height="54" viewBox="0 0 52 54" fill="none" stroke="currentColor" stroke-width="4.500" stroke-linecap="round" stroke-linejoin="round" aria-hidden="true">
            <path d="M26 3V39M13 26L26 39 39 26"></path>
            <path d="M3 50.500H49"></path>
          </svg>
          <span>다운로드 2</span>
        </button>
      </div>
      <nav class="nav">
        <button aria-label="최근 앱">
          <svg width="42" height="46" viewBox="0 0 42 46" stroke="currentColor" stroke-width="3.500" stroke-linecap="round" aria-hidden="true">
            <path d="M3 3V43M21 3V43M39 3V43"></path>
          </svg>
        </button>
        <button aria-label="홈">
          <svg width="46" height="46" viewBox="0 0 46 46" fill="none" stroke="currentColor" stroke-width="4" aria-hidden="true">
            <rect x="3" y="3" width="40" height="40" rx="12"></rect>
          </svg>
        </button>
        <button aria-label="뒤로">
          <svg width="28" height="48" viewBox="0 0 28 48" fill="none" stroke="currentColor" stroke-width="4" aria-hidden="true">
            <path d="M26 2L4 24 26 46"></path>
          </svg>
        </button>
      </nav>
    `;
  }
}
